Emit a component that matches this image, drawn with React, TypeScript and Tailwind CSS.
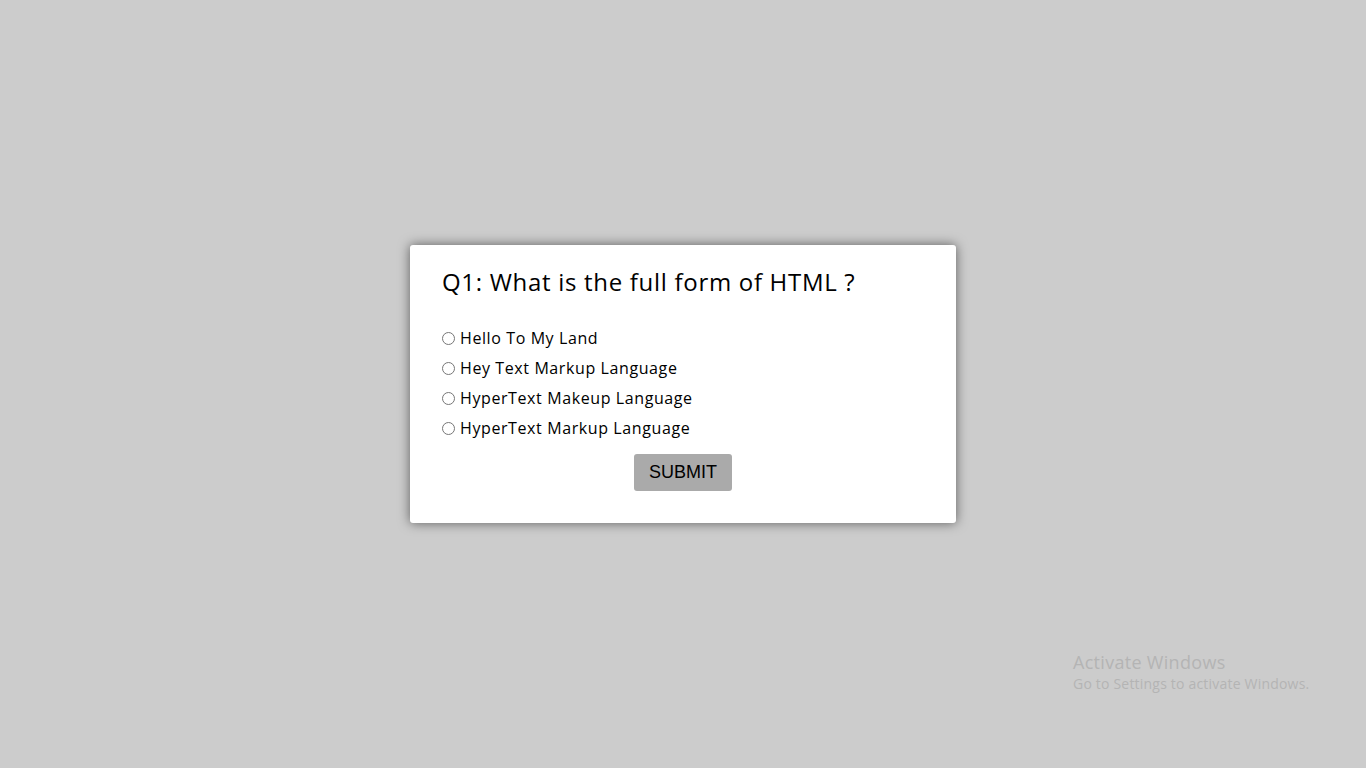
import { useState } from "react"

const options = [
  "Hello To My Land",
  "Hey Text Markup Language",
  "HyperText Makeup Language",
  "HyperText Markup Language",
]

export default function App() {
  const [picked, setPicked] = useState<number | null>(null)

  return (
    <div className="relative min-h-screen bg-[#cccccc] flex items-center justify-center font-['Open_Sans',sans-serif]">
      <div className="w-[546px] h-[278px] bg-white rounded-[3px] shadow-[0_0_12px_rgba(0,0,0,0.55)] px-8 pt-[19px] flex flex-col">
        <h2 className="text-[24px] leading-[36px] tracking-[0.7px] text-black">Q1: What is the full form of HTML ?</h2>

        <div className="mt-[23px] flex flex-col">
          {options.map((o, i) => (
            <label key={o} className="h-[30px] flex items-center text-[16px] tracking-[0.6px] text-black cursor-pointer">
              <input
                type="radio"
                name="q1"
                checked={picked === i}
                onChange={() => setPicked(i)}
                className="m-0 mr-[5px] w-[13px] h-[13px]"
              />
              {o}
            </label>
          ))}
        </div>

        <div className="mt-[11px] flex justify-center">
          <button className="w-[98px] h-[37px] bg-[#aaaaaa] rounded-[3px] text-[18px] text-black font-['Liberation_Sans',Arial,sans-serif]">
            SUBMIT
          </button>
        </div>
      </div>

      {/* windows watermark */}
      <div className="absolute left-[1073px] top-[650px] text-[#b4b4b4] font-['Open_Sans',sans-serif] pointer-events-none">
        <div className="text-[18px] leading-[24px] tracking-[0.3px]">Activate Windows</div>
        <div className="text-[14px] leading-[20px] tracking-[0.2px]">Go to Settings to activate Windows.</div>
      </div>
    </div>
  )
}
